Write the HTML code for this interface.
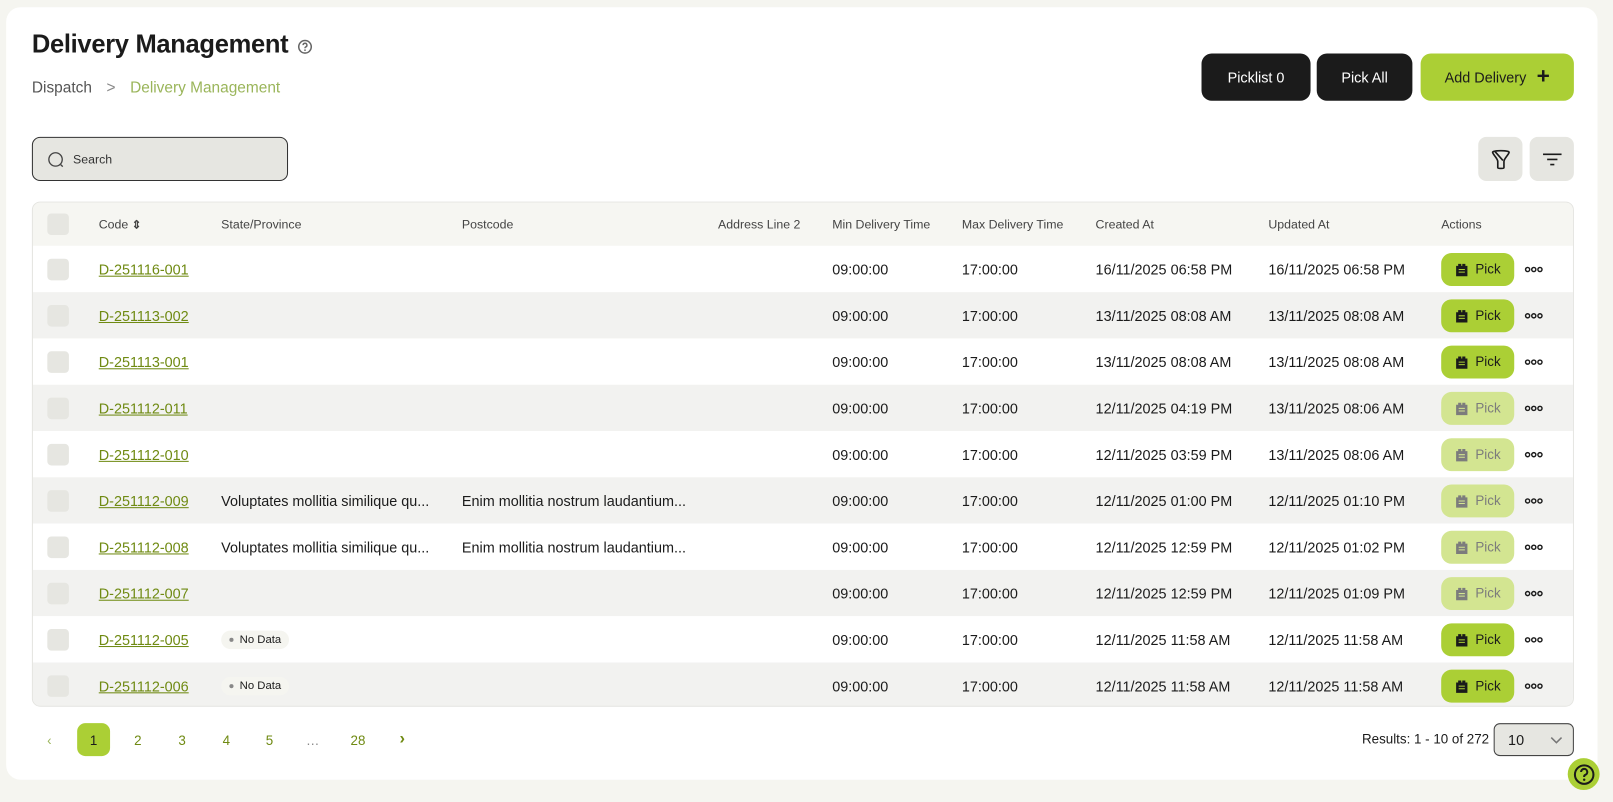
<!DOCTYPE html>
<html><head><meta charset="utf-8"><style>
*{box-sizing:border-box;margin:0;padding:0}
body{width:1613px;height:802px;background:#f5f5f0;font-family:"Liberation Sans",sans-serif;color:#1b1b1b;position:relative;overflow:hidden}
#w{position:absolute;left:0;top:0;width:1568px;height:780px;transform:scale(1.02869);transform-origin:0 0}
.card{position:absolute;left:6px;top:7px;width:1547px;height:751px;background:#fff;border-radius:14px}
.abs{position:absolute}
h1{position:absolute;left:31px;top:30px;font-size:24.8px;font-weight:bold;letter-spacing:-0.3px}
.crumb{position:absolute;left:31px;top:77px;font-size:15px;color:#555}
.crumb .g{color:#9ab55a}
.btn{position:absolute;top:52px;height:46px;border-radius:10px;display:flex;align-items:center;justify-content:center;font-size:14px}
.dark{background:#1b1b1b;color:#fff}
.search{position:absolute;left:31px;top:133px;width:249px;height:43px;border:1px solid #333;border-radius:8px;background:#e6e6e1;font-size:12px;color:#333}
.ib{position:absolute;top:133px;width:43px;height:43px;border-radius:8px;background:#e6e6e1;display:flex;align-items:center;justify-content:center}
.table{position:absolute;left:31px;top:196px;width:1499px;height:491px;border:1px solid #e4e4e0;border-radius:8px;overflow:hidden}
.row{position:absolute;left:0;width:1499px;height:45px;font-size:14px}
.row>*{position:absolute;top:50%;transform:translateY(-50%);white-space:nowrap}
.hd{top:0;height:42px;background:#f6f6f2;font-size:12px;color:#444}
.cb{left:14px;width:21px;height:21px;border-radius:4px;background:#e6e6e1}
.code{color:#6f8a12;text-decoration:underline;left:64px}
.pick{left:1369px;width:71px;height:32px;border-radius:10px;background:#abcf35;display:flex;align-items:center;justify-content:center;gap:6px;font-size:13px;color:#1b1b1b}
.pick.dis{background:#d3e591;color:#7c7c7c}
.dots{left:1450px;display:flex}
.nd{left:183px;background:#f5f5f0;border-radius:10px;padding:3px 8px 3px 8px;font-size:11px;display:flex;align-items:center;gap:6px}
.nd i{width:4px;height:4px;border-radius:50%;background:#888;display:block}
.pg{position:absolute;top:703px;width:32px;height:32px;display:flex;align-items:center;justify-content:center;font-size:13px;color:#6f8a12}
</style></head><body><div id="w">
<div class="card"></div>
<h1>Delivery Management</h1>
<svg class="abs" style="left:289px;top:38px" width="15" height="15" viewBox="0 0 16 16"><circle cx="8" cy="8" r="6.5" fill="none" stroke="#666" stroke-width="1.6"/><path d="M6 6.3a2 2 0 1 1 2.6 1.9c-.5.2-.6.5-.6 1v.3" fill="none" stroke="#666" stroke-width="1.5"/><circle cx="8" cy="11.4" r=".9" fill="#666"/></svg>
<div class="crumb">Dispatch <span style="margin:0 10px;color:#888">&gt;</span> <span class="g">Delivery Management</span></div>
<div class="btn dark" style="left:1168px;width:106px">Picklist 0</div>
<div class="btn dark" style="left:1280px;width:93px">Pick All</div>
<div class="btn" style="left:1381px;width:149px;background:#abcf35;color:#1b1b1b">Add Delivery <span style="font-size:22px;font-weight:bold;margin-left:10px;margin-top:-3px">+</span></div>
<div class="search"><svg class="abs" style="left:14px;top:13px" width="17" height="17" viewBox="0 0 17 17"><circle cx="8" cy="8" r="6.5" fill="none" stroke="#444" stroke-width="1.3"/><path d="M13 13l2 2" stroke="#444" stroke-width="1.3"/></svg><span class="abs" style="left:39px;top:14px">Search</span></div>
<div class="ib" style="left:1437px"><svg width="20" height="22" viewBox="0 0 20 22"><path d="M2 4c0-2 16-2 16 0 0 2-5 6-5 9v6c0 1-6 1-6 0v-6C7 10 2 6 2 4zM4 3l8 9" fill="none" stroke="#1b1b1b" stroke-width="1.6" stroke-linejoin="round"/></svg></div>
<div class="ib" style="left:1487px"><svg width="20" height="14" viewBox="0 0 20 14"><path d="M1 2h18M5 7h10M8 12h4" stroke="#1b1b1b" stroke-width="1.6"/></svg></div>
<div class="table">
<div class="row hd"><div class="cb"></div><span style="left:64px">Code <b style="font-size:11px">⇕</b></span><span style="left:183px">State/Province</span><span style="left:417px">Postcode</span><span style="left:666px">Address Line 2</span><span style="left:777px">Min Delivery Time</span><span style="left:903px">Max Delivery Time</span><span style="left:1033px">Created At</span><span style="left:1201px">Updated At</span><span style="left:1369px">Actions</span></div>
<div id="rows"></div>
</div>
<div class="pg" style="left:32px;color:#9ab55a">&#8249;</div>
<div class="pg" style="left:75px;background:#abcf35;border-radius:8px;color:#1b1b1b">1</div>
<div class="pg" style="left:118px">2</div><div class="pg" style="left:161px">3</div><div class="pg" style="left:204px">4</div><div class="pg" style="left:246px">5</div><div class="pg" style="left:288px;color:#888">…</div><div class="pg" style="left:332px">28</div>
<div class="pg" style="left:375px;font-weight:bold;font-size:16px">&#8250;</div>
<div class="abs" style="left:1324px;top:711px;font-size:13px">Results: 1 - 10 of 272</div>
<div class="abs" style="left:1452px;top:703px;width:78px;height:32px;border:1px solid #444;border-radius:6px;background:#e6e6e1;font-size:14px;padding:7px 0 0 13px">10<svg class="abs" style="left:54px;top:12px" width="12" height="8" viewBox="0 0 12 8"><path d="M1 1l5 5 5-5" fill="none" stroke="#777" stroke-width="1.5"/></svg></div>
<div class="abs" style="left:1524px;top:737px;width:31px;height:31px;border-radius:50%;background:#abcf35;display:flex;align-items:center;justify-content:center"><svg width="22" height="22" viewBox="0 0 22 22"><circle cx="11" cy="11" r="9" fill="none" stroke="#1b1b1b" stroke-width="2"/><path d="M8 8.5a3 3 0 1 1 4 2.8c-.7.3-1 .7-1 1.5v.5" fill="none" stroke="#1b1b1b" stroke-width="2"/><circle cx="11" cy="16" r="1.2" fill="#1b1b1b"/></svg></div>
</div>
<script>
var d=[["D-251116-001","","","16/11/2025 06:58 PM","16/11/2025 06:58 PM",0],
["D-251113-002","","","13/11/2025 08:08 AM","13/11/2025 08:08 AM",0],
["D-251113-001","","","13/11/2025 08:08 AM","13/11/2025 08:08 AM",0],
["D-251112-011","","","12/11/2025 04:19 PM","13/11/2025 08:06 AM",1],
["D-251112-010","","","12/11/2025 03:59 PM","13/11/2025 08:06 AM",1],
["D-251112-009","Voluptates mollitia similique qu...","Enim mollitia nostrum laudantium...","12/11/2025 01:00 PM","12/11/2025 01:10 PM",1],
["D-251112-008","Voluptates mollitia similique qu...","Enim mollitia nostrum laudantium...","12/11/2025 12:59 PM","12/11/2025 01:02 PM",1],
["D-251112-007","","","12/11/2025 12:59 PM","12/11/2025 01:09 PM",1],
["D-251112-005","N","","12/11/2025 11:58 AM","12/11/2025 11:58 AM",0],
["D-251112-006","N","","12/11/2025 11:58 AM","12/11/2025 11:58 AM",0]];
var ic='<svg width="14" height="14" viewBox="0 0 14 14"><path d="M2 4h10v9H2zM4 4V2h2v2M8 4V2h2v2" fill="currentColor" stroke="currentColor" stroke-width="1"/><path d="M4 7h6M4 9.5h6" stroke="#abcf35" stroke-width="1"/></svg>';
var dots='<svg width="18" height="6" viewBox="0 0 18 6"><circle cx="3" cy="3" r="2" fill="none" stroke="#1b1b1b" stroke-width="1.4"/><circle cx="9" cy="3" r="2" fill="none" stroke="#1b1b1b" stroke-width="1.4"/><circle cx="15" cy="3" r="2" fill="none" stroke="#1b1b1b" stroke-width="1.4"/></svg>';
var h='';d.forEach(function(r,i){
var st=r[1]=="N"?'<span class="nd"><i></i>No Data</span>':'<span style="left:183px">'+r[1]+'</span>';
h+='<div class="row" style="top:'+(42+i*45)+'px;background:'+(i%2?'#f2f2f0':'#fff')+'"><div class="cb"></div><span class="code">'+r[0]+'</span>'+st+'<span style="left:417px">'+r[2]+'</span><span style="left:777px">09:00:00</span><span style="left:903px">17:00:00</span><span style="left:1033px">'+r[3]+'</span><span style="left:1201px">'+r[4]+'</span><div class="pick'+(r[5]?' dis':'')+'">'+ic.replace('#abcf35',r[5]?'#d3e591':'#abcf35')+'Pick</div><span class="dots">'+dots+'</span></div>';});
document.getElementById('rows').innerHTML=h;
</script>
</body></html>
